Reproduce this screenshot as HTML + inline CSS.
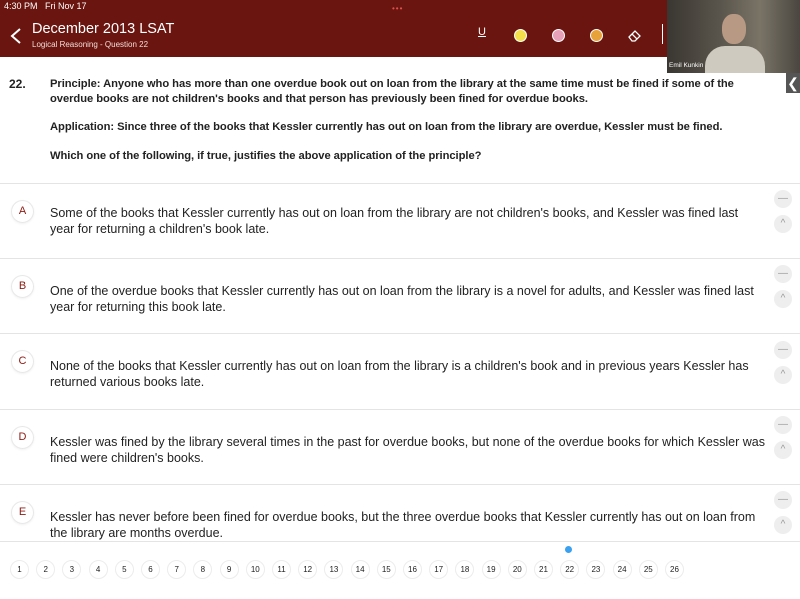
<!DOCTYPE html>
<html><head><meta charset="utf-8"><style>
*{margin:0;padding:0;box-sizing:border-box}
body{width:800px;height:599px;overflow:hidden;background:#fff;font-family:"Liberation Sans",sans-serif;color:#222;position:relative}
.hdr{position:absolute;left:0;top:0;width:800px;height:57px;background:#6a150f}
.abs{position:absolute}
.status{left:4px;top:1px;font-size:9px;color:#fff}
.title{left:32px;top:21px;color:#fff;font-size:14.5px}
.sub{left:32px;top:40px;color:#f2dcd8;font-size:8px}
.q{font-size:11.2px;font-weight:bold;color:#222;left:50px;width:720px;line-height:15px;letter-spacing:-0.05px}
.row{position:absolute;left:0;width:800px;border-top:1px solid #e4e4e4;background:#fff}
.lt{position:absolute;left:11px;width:23px;height:23px;border-radius:50%;border:1px solid #e8e8e8;color:#8b1a12;font-size:11px;text-align:center;line-height:21px;box-shadow:0 1px 2px rgba(0,0,0,.06)}
.ot{position:absolute;left:50px;font-size:12.5px;line-height:16px;color:#222;white-space:nowrap}
.ctl{position:absolute;left:774px;width:18px;height:18px;border-radius:50%;background:#eeeeee;color:#999;font-size:10px;text-align:center;line-height:18px}
.pg{position:absolute;top:560px;width:19px;height:19px;border-radius:50%;border:1px solid #ececec;font-size:8px;text-align:center;line-height:17px;color:#222}
.dot{width:13px;height:13px;border-radius:50%;border:1.5px solid #fff}
</style></head><body>
<div class="hdr"></div>
<div class="abs status">4:30 PM &nbsp; Fri Nov 17</div>
<div class="abs" style="left:392px;top:4px;color:#e05050;font-size:8px;letter-spacing:1px">•••</div>
<svg class="abs" style="left:9px;top:27px" width="14" height="18"><path d="M11 2 L3 9 L11 16" stroke="#fff" stroke-width="2" fill="none"/></svg>
<div class="abs title">December 2013 LSAT</div>
<div class="abs sub">Logical Reasoning - Question 22</div>
<div class="abs" style="left:478px;top:26px;color:#fff;font-size:11px;text-decoration:underline">U</div>
<div class="abs dot" style="left:514px;top:29px;background:#f3e04a"></div>
<div class="abs dot" style="left:552px;top:29px;background:#e6a0b8"></div>
<div class="abs dot" style="left:590px;top:29px;background:#e8a23a"></div>
<svg class="abs" style="left:627px;top:28px" width="15" height="14"><path d="M2 9 L8 3 L13 8 L8 13 L5 13 Z M5 6 L10 11" stroke="#fff" stroke-width="1.3" fill="none"/></svg>
<div class="abs" style="left:662px;top:24px;width:1px;height:20px;background:#fff"></div>
<div class="abs" style="left:667px;top:0;width:133px;height:73px;background:linear-gradient(90deg,#3a3631,#5a554c 40%,#7a7467 70%,#4a4640)"></div>
<div class="abs" style="left:722px;top:14px;width:24px;height:30px;border-radius:45%;background:#b89a84"></div>
<div class="abs" style="left:705px;top:46px;width:60px;height:27px;border-radius:20px 20px 0 0;background:#cfcac0"></div>
<div class="abs" style="left:669px;top:62px;color:#fff;font-size:6.5px">Emil Kunkin</div>
<div class="abs" style="left:786px;top:73px;width:14px;height:20px;background:#555;color:#fff;font-size:14px;line-height:20px;text-align:center">❮</div>

<div class="abs" style="left:9px;top:77px;font-size:12px;font-weight:bold">22.</div>
<div class="abs q" style="top:77px">Principle: Anyone who has more than one overdue book out on loan from the library at the same time must be fined if some of the overdue books are not children's books and that person has previously been fined for overdue books.</div>
<div class="abs q" style="top:120px">Application: Since three of the books that Kessler currently has out on loan from the library are overdue, Kessler must be fined.</div>
<div class="abs q" style="top:149px">Which one of the following, if true, justifies the above application of the principle?</div>

<div class="row" style="top:183px;height:75px"><div class="lt" style="top:16px">A</div><div class="ot" style="top:21px">Some of the books that Kessler currently has out on loan from the library are not children's books, and Kessler was fined last<br>year for returning a children's book late.</div><div class="ctl" style="top:6px">—</div><div class="ctl" style="top:31px">^</div></div>
<div class="row" style="top:258px;height:75px"><div class="lt" style="top:16px">B</div><div class="ot" style="top:24px">One of the overdue books that Kessler currently has out on loan from the library is a novel for adults, and Kessler was fined last<br>year for returning this book late.</div><div class="ctl" style="top:6px">—</div><div class="ctl" style="top:31px">^</div></div>
<div class="row" style="top:333px;height:76px"><div class="lt" style="top:16px">C</div><div class="ot" style="top:24px">None of the books that Kessler currently has out on loan from the library is a children's book and in previous years Kessler has<br>returned various books late.</div><div class="ctl" style="top:7px">—</div><div class="ctl" style="top:32px">^</div></div>
<div class="row" style="top:409px;height:75px"><div class="lt" style="top:16px">D</div><div class="ot" style="top:24px">Kessler was fined by the library several times in the past for overdue books, but none of the overdue books for which Kessler was<br>fined were children's books.</div><div class="ctl" style="top:6px">—</div><div class="ctl" style="top:31px">^</div></div>
<div class="row" style="top:484px;height:58px;border-bottom:1px solid #e4e4e4"><div class="lt" style="top:16px">E</div><div class="ot" style="top:24px">Kessler has never before been fined for overdue books, but the three overdue books that Kessler currently has out on loan from<br>the library are months overdue.</div><div class="ctl" style="top:6px">—</div><div class="ctl" style="top:31px">^</div></div>
<div class="abs" style="left:565px;top:546px;width:7px;height:7px;border-radius:50%;background:#3aa0f0"></div>
<div id="pg"></div>
<script>
var h='';for(var i=1;i<=26;i++){h+='<div class="pg" style="left:'+(10+(i-1)*26.2)+'px">'+i+'</div>';}
document.getElementById('pg').outerHTML=h;
</script>
</body></html>
